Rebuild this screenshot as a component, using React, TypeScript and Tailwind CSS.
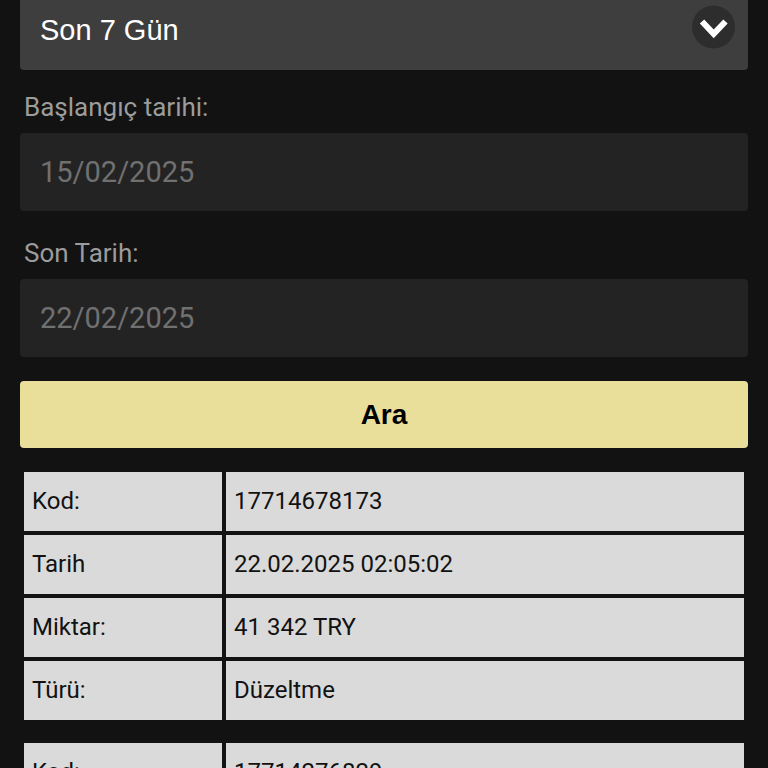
import { useState } from "react";

interface Transaction {
  code: string;
  date?: string;
  amount?: string;
  type?: string;
}

const TRANSACTIONS: Transaction[] = [
  { code: "17714678173", date: "22.02.2025 02:05:02", amount: "41 342 TRY", type: "Düzeltme" },
  { code: "17714276829" },
];

function PeriodSelect() {
  const [period, setPeriod] = useState("7");

  return (
    <div className="relative">
      <select
        aria-label="Dönem"
        value={period}
        onChange={(e) => setPeriod(e.target.value)}
        className="block h-[78px] w-full appearance-none rounded bg-[#3e3e3e] px-5 font-['Liberation_Sans',sans-serif] text-[29px] text-white"
      >
        <option value="7">Son 7 Gün</option>
      </select>
      <svg
        viewBox="0 0 44 44"
        className="pointer-events-none absolute right-3 top-[13px] h-11 w-11"
        fill="none"
      >
        <circle cx="21.5" cy="22" r="21.5" fill="#2d2d2d" />
        <path d="M10 16.5 L21.7 28.8 L33.5 16.5" stroke="#fff" strokeWidth="6" />
      </svg>
    </div>
  );
}

function DateField({ id, label, value }: { id: string; label: string; value: string }) {
  return (
    <div>
      <label htmlFor={id} className="block px-1 pb-2 text-[26px] leading-9 text-[#9c9c9c]">
        {label}
      </label>
      <input
        id={id}
        type="text"
        disabled
        defaultValue={value}
        className="block h-[78px] w-full rounded bg-[#232323] px-5 text-[29px] text-[#707070]"
      />
    </div>
  );
}

function TransactionTable({ item }: { item: Transaction }) {
  const rows = [
    ["Kod:", item.code],
    ["Tarih", item.date],
    ["Miktar:", item.amount],
    ["Türü:", item.type],
  ].filter(([, value]) => value);

  return (
    <table className="w-full table-fixed border-separate border-spacing-1 text-2xl text-[#121212]">
      <tbody>
        {rows.map(([name, value]) => (
          <tr key={name} className="h-[59px]">
            <th scope="row" className="w-[198px] bg-[#dadada] px-2 pb-0.5 text-left font-normal">
              {name}
            </th>
            <td className="bg-[#dadada] px-2 pb-0.5">{value}</td>
          </tr>
        ))}
      </tbody>
    </table>
  );
}

export default function App() {
  return (
    <div className="h-screen overflow-hidden bg-[#121212] font-[Roboto,sans-serif]">
      <form className="-mt-2 px-5" onSubmit={(e) => e.preventDefault()}>
        <PeriodSelect />
        <div className="mt-[19px] flex flex-col gap-6">
          <DateField id="start-date" label="Başlangıç tarihi:" value="15/02/2025" />
          <DateField id="end-date" label="Son Tarih:" value="22/02/2025" />
          <button
            type="submit"
            className="h-[67px] w-full rounded bg-[#e9df9b] font-['Liberation_Sans',sans-serif] text-[28px] font-bold text-black"
          >
            Ara
          </button>
        </div>
      </form>

      {/* Results */}
      <div className="mt-5 flex flex-col gap-[15px] px-5">
        {TRANSACTIONS.map((item) => (
          <TransactionTable key={item.code} item={item} />
        ))}
      </div>
    </div>
  );
}
